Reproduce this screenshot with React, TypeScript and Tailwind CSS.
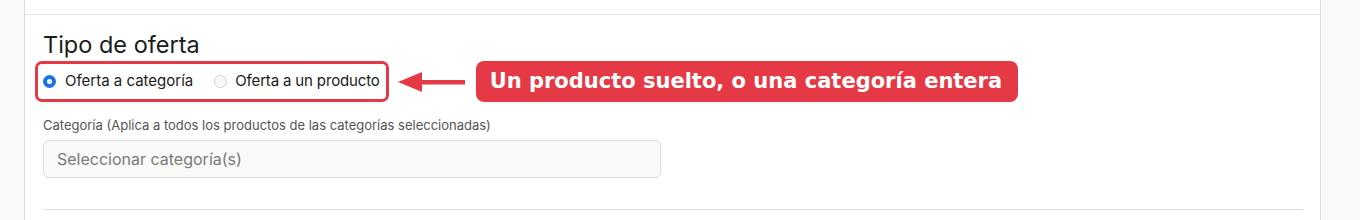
import React, { useState } from 'react';

const App: React.FC = () => {
  const [tipo, setTipo] = useState<'categoria' | 'producto'>('categoria');

  return (
    <div className="flex h-[220px] bg-[#f9f9f8] font-['Inter',sans-serif] text-[#1b1b1b]">
      <div className="w-6 shrink-0" />
      <div className="w-[1297px] shrink-0 bg-white border-x border-[#dcdcdc]">
        <div className="h-[15px] border-b border-[#e4e4e4]" />
        <div className="pl-[18px] pr-[17px]">
          <h2 className="mt-[15px] text-[23.5px] leading-[30px] font-normal">Tipo de oferta</h2>

          <div className="mt-[1px] flex items-center">
            <div className="flex items-center h-[41px] -ml-[8px] pl-[5px] pr-[6px] border-[3px] border-[#e63946] rounded-[7px]">
              <label className="flex items-center cursor-pointer" onClick={() => setTipo('categoria')}>
                <span
                  className={`w-[13px] h-[13px] rounded-full shrink-0 ${
                    tipo === 'categoria' ? 'border-[4px] border-[#1a73e8] bg-white' : 'border border-[#d5d5d5] bg-[#f7f7f7]'
                  }`}
                />
                <span className="ml-[9px] text-[15px]">Oferta a categoría</span>
              </label>
              <label className="flex items-center ml-[21px] cursor-pointer" onClick={() => setTipo('producto')}>
                <span
                  className={`w-[13px] h-[13px] rounded-full shrink-0 ${
                    tipo === 'producto' ? 'border-[4px] border-[#1a73e8] bg-white' : 'border border-[#d5d5d5] bg-[#f7f7f7]'
                  }`}
                />
                <span className="ml-[8px] text-[15px] tracking-[-0.15px]">Oferta a un producto</span>
              </label>
            </div>

            {/* arrow pointing back to the radio group */}
            <svg className="ml-[9px] shrink-0" width="67" height="22" viewBox="0 0 67 22">
              <polygon points="0,11 24,1 24,21" fill="#e63946" />
              <rect x="24" y="9" width="43" height="4.5" fill="#e63946" />
            </svg>

            <div className="ml-[11px] h-[41px] w-[542px] rounded-[8px] bg-[#e63946] flex items-center pl-[14px] text-white font-['DejaVu_Sans',sans-serif] font-bold text-[21px]">
              Un producto suelto, o una categoría entera
            </div>
          </div>

          <p className="mt-[15px] text-[13px] leading-[16px] text-[#555]">
            Categoría (Aplica a todos los productos de las categorías seleccionadas)
          </p>
          <div className="mt-[7px] w-[618px] h-[38px] rounded-[6px] border border-[#dcdcdc] bg-[#f9f9f8] flex items-center px-[13px] text-[16px] text-[#7a7a7a]">
            Seleccionar categoría(s)
          </div>

          <div className="mt-[31px] border-t border-[#dcdcdc]" />
        </div>
      </div>
    </div>
  );
};

export default App;
